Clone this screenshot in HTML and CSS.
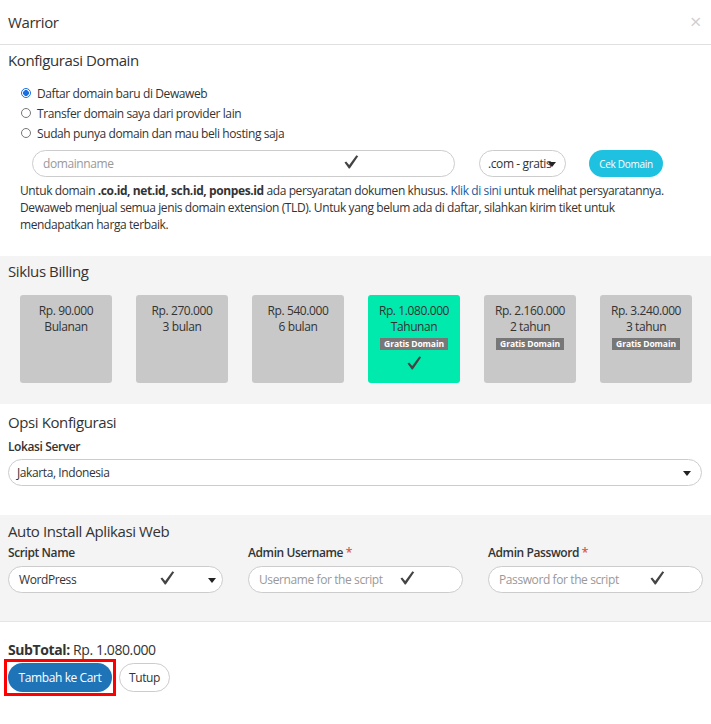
FILE: index.html
```html
<!DOCTYPE html>
<html>
<head>
<meta charset="utf-8">
<link rel="stylesheet" href="styles.css">
</head>
<body>
<div class="modal">
  <div class="modal-header">
    <span class="modal-title">Warrior</span>
    <span class="close">×</span>
  </div>

  <section class="sec sec-white domain">
    <h3 class="sec-title">Konfigurasi Domain</h3>
    <ul class="radios">
      <li><span class="radio checked"></span>Daftar domain baru di Dewaweb</li>
      <li><span class="radio"></span>Transfer domain saya dari provider lain</li>
      <li><span class="radio"></span>Sudah punya domain dan mau beli hosting saja</li>
    </ul>
    <div class="domain-row">
      <div class="field domain-input">
        <span class="placeholder">domainname</span>
        <svg class="check" viewBox="0 0 16 16" width="16" height="16"><path d="M1.5 8.4 L3.2 7.5 L6.2 11 L13.4 1.2 L15.2 2.3 L6.8 14.6 L5.8 14.6 Z" fill="#444"/></svg>
      </div>
      <div class="field tld-select"><span class="val">.com - gratis</span><span class="caret"></span></div>
      <button class="btn-cek">Cek Domain</button>
    </div>
    <p class="note">Untuk domain <b>.co.id, net.id, sch.id, ponpes.id</b> ada persyaratan dokumen khusus. <a href="#">Klik di sini</a> untuk melihat persyaratannya. Dewaweb menjual semua jenis domain extension (TLD). Untuk yang belum ada di daftar, silahkan kirim tiket untuk mendapatkan harga terbaik.</p>
  </section>

  <section class="sec sec-gray billing">
    <h3 class="sec-title">Siklus Billing</h3>
    <div class="cards">
      <div class="card"><div>Rp. 90.000</div><div>Bulanan</div></div>
      <div class="card"><div>Rp. 270.000</div><div>3 bulan</div></div>
      <div class="card"><div>Rp. 540.000</div><div>6 bulan</div></div>
      <div class="card active"><div>Rp. 1.080.000</div><div>Tahunan</div><span class="badge">Gratis Domain</span>
        <svg class="check card-check" viewBox="0 0 16 16" width="16" height="16"><path d="M1.5 8.4 L3.2 7.5 L6.2 11 L13.4 1.2 L15.2 2.3 L6.8 14.6 L5.8 14.6 Z" fill="#444"/></svg>
      </div>
      <div class="card"><div>Rp. 2.160.000</div><div>2 tahun</div><span class="badge">Gratis Domain</span></div>
      <div class="card"><div>Rp. 3.240.000</div><div>3 tahun</div><span class="badge">Gratis Domain</span></div>
    </div>
  </section>

  <section class="sec sec-white opsi">
    <h3 class="sec-title">Opsi Konfigurasi</h3>
    <label class="lbl">Lokasi Server</label>
    <div class="field select-full"><span class="val">Jakarta, Indonesia</span><span class="caret"></span></div>
  </section>

  <section class="sec sec-gray install">
    <h3 class="sec-title">Auto Install Aplikasi Web</h3>
    <div class="install-grid">
      <div class="col">
        <label class="lbl">Script Name</label>
        <div class="field script-select"><span class="val">WordPress</span>
          <svg class="check" viewBox="0 0 16 16" width="16" height="16"><path d="M1.5 8.4 L3.2 7.5 L6.2 11 L13.4 1.2 L15.2 2.3 L6.8 14.6 L5.8 14.6 Z" fill="#444"/></svg>
          <span class="caret"></span></div>
      </div>
      <div class="col">
        <label class="lbl">Admin Username <span class="req">*</span></label>
        <div class="field"><span class="placeholder">Username for the script</span>
          <svg class="check" viewBox="0 0 16 16" width="16" height="16"><path d="M1.5 8.4 L3.2 7.5 L6.2 11 L13.4 1.2 L15.2 2.3 L6.8 14.6 L5.8 14.6 Z" fill="#444"/></svg>
        </div>
      </div>
      <div class="col">
        <label class="lbl">Admin Password <span class="req">*</span></label>
        <div class="field"><span class="placeholder">Password for the script</span>
          <svg class="check" viewBox="0 0 16 16" width="16" height="16"><path d="M1.5 8.4 L3.2 7.5 L6.2 11 L13.4 1.2 L15.2 2.3 L6.8 14.6 L5.8 14.6 Z" fill="#444"/></svg>
        </div>
      </div>
    </div>
  </section>

  <div class="footer">
    <div class="subtotal"><b>SubTotal:</b> Rp. 1.080.000</div>
    <div class="actions">
      <span class="highlight"><button class="btn-primary">Tambah ke Cart</button></span>
      <button class="btn-default">Tutup</button>
    </div>
  </div>
</div>
</body>
</html>
```

FILE: styles.css
```css
* { box-sizing: border-box; }
html, body { margin: 0; padding: 0; background: #fff; }
body {
  font-family: "Open Sans", "Liberation Sans", sans-serif;
  font-size: 12px;
  letter-spacing: -0.4px;
  color: #333;
  width: 711px;
  height: 724px;
  overflow: hidden;
}
.modal { width: 711px; }
.modal-header {
  height: 45px;
  border-bottom: 1px solid #e0e0e0;
  display: flex;
  align-items: center;
  justify-content: space-between;
  padding: 0 8px;
}
.modal-title { font-size: 15px; color: #333; letter-spacing: -0.4px; }
.close { font-size: 20px; color: #cfcfcf; line-height: 1; margin-right: 2px; }

.sec { padding: 0 8px; }
.sec-gray { background: #f4f4f4; }
.sec-title { font-size: 15px; font-weight: 400; margin: 0; color: #333; letter-spacing: -0.4px; line-height: 20px; }

.domain { padding-top: 5px; padding-bottom: 23px; }
.radios { list-style: none; margin: 13px 0 0; padding: 0 0 0 12px; }
.radios li { display: flex; align-items: center; height: 20px; }
.radio {
  width: 10px; height: 10px; border-radius: 50%;
  border: 1px solid #777; margin-right: 6px; margin-left: 1px; background: #fff;
}
.radio.checked { border: 1px solid #1a6fe0; background: radial-gradient(circle, #1a6fe0 0 2.6px, #fff 3.2px); }

.domain-row { display: flex; align-items: center; margin: 7px 0 0 24px; height: 27px; }
.field {
  height: 27px;
  border: 1px solid #ccc;
  border-radius: 14px;
  background: #fff;
  display: flex;
  align-items: center;
  padding: 0 10px;
  position: relative;
  white-space: nowrap;
}
.placeholder { color: #999; }
.check { display: block; }
.domain-input { width: 423px; }
.domain-input .check { position: absolute; left: 310px; top: 3px; }
.tld-select { width: 87px; margin-left: 24px; padding-left: 8px; overflow: hidden; }
.caret {
  width: 0; height: 0;
  border-left: 4px solid transparent; border-right: 4px solid transparent;
  border-top: 5px solid #222;
}
.tld-select .caret { position: absolute; right: 9px; top: 11px; }
.btn-cek {
  margin-left: 23px;
  height: 27px; width: 74px;
  border: none; border-radius: 14px;
  background: #1fc1e1; color: #fff;
  font-family: inherit; font-size: 10px; padding: 0; letter-spacing: -0.3px;
}
.note { margin: 5px 24px 0 12px; line-height: 17px; color: #333; }
.note b { font-weight: 700; }
.note a { color: #1d5b9a; text-decoration: none; }

.billing { padding-top: 5px; padding-bottom: 21px; }
.cards { display: flex; gap: 24px; margin: 14px 0 0 12px; }
.card {
  width: 92px; height: 88px;
  background: #c8c8c8;
  border-radius: 3px;
  display: flex; flex-direction: column; align-items: center;
  padding-top: 8px;
  line-height: 16px;
  color: #333;
}
.card.active { background: #00eaae; }
.badge {
  margin-top: 3px;
  background: #777; color: #fff;
  font-size: 8.5px; font-weight: 700; letter-spacing: -0.1px;
  line-height: 12px; padding: 0 4px;
}
.card-check { margin-top: 5px; }

.opsi { padding-top: 8px; padding-bottom: 29px; }
.lbl { display: block; font-weight: 600; color: #333; line-height: 16px; }
.opsi .lbl { margin-top: 7px; }
.select-full { margin-top: 4px; width: 694px; padding-left: 8px; }
.select-full .caret { position: absolute; right: 10px; top: 11px; }

.install { padding-top: 6px; padding-bottom: 28px; border-bottom: 1px solid #e5e5e5; }
.install-grid { display: grid; grid-template-columns: 215px 215px 215px; column-gap: 25px; margin-top: 4px; }
.install .lbl { margin-bottom: 5px; }
.req { color: #d9534f; }
.install .field { width: 215px; }
.script-select .check { position: absolute; left: 150px; top: 3px; }
.script-select .caret { position: absolute; right: 6px; top: 11px; }
.install .col:nth-child(2) .check { position: absolute; left: 150px; top: 3px; }
.install .col:nth-child(3) .check { position: absolute; left: 160px; top: 3px; }

.footer { padding: 18px 8px 0; }
.subtotal { font-size: 14px; line-height: 20px; color: #333; letter-spacing: -0.4px; }
.actions { display: flex; align-items: center; margin-top: -1px; }
.highlight { border: 3px solid #ff0000; padding: 1px; display: inline-flex; margin-left: -4px; }
.btn-primary {
  height: 29px; width: 104px; border: none; border-radius: 15px;
  background: #1f74b8; color: #fff; font-family: inherit; font-size: 12px; padding: 0; letter-spacing: -0.4px;
}
.btn-default {
  margin-left: 3px;
  height: 29px; width: 51px; border: 1px solid #ccc; border-radius: 15px;
  background: #fff; color: #333; font-family: inherit; font-size: 12px; padding: 0; letter-spacing: -0.4px;
}
```
